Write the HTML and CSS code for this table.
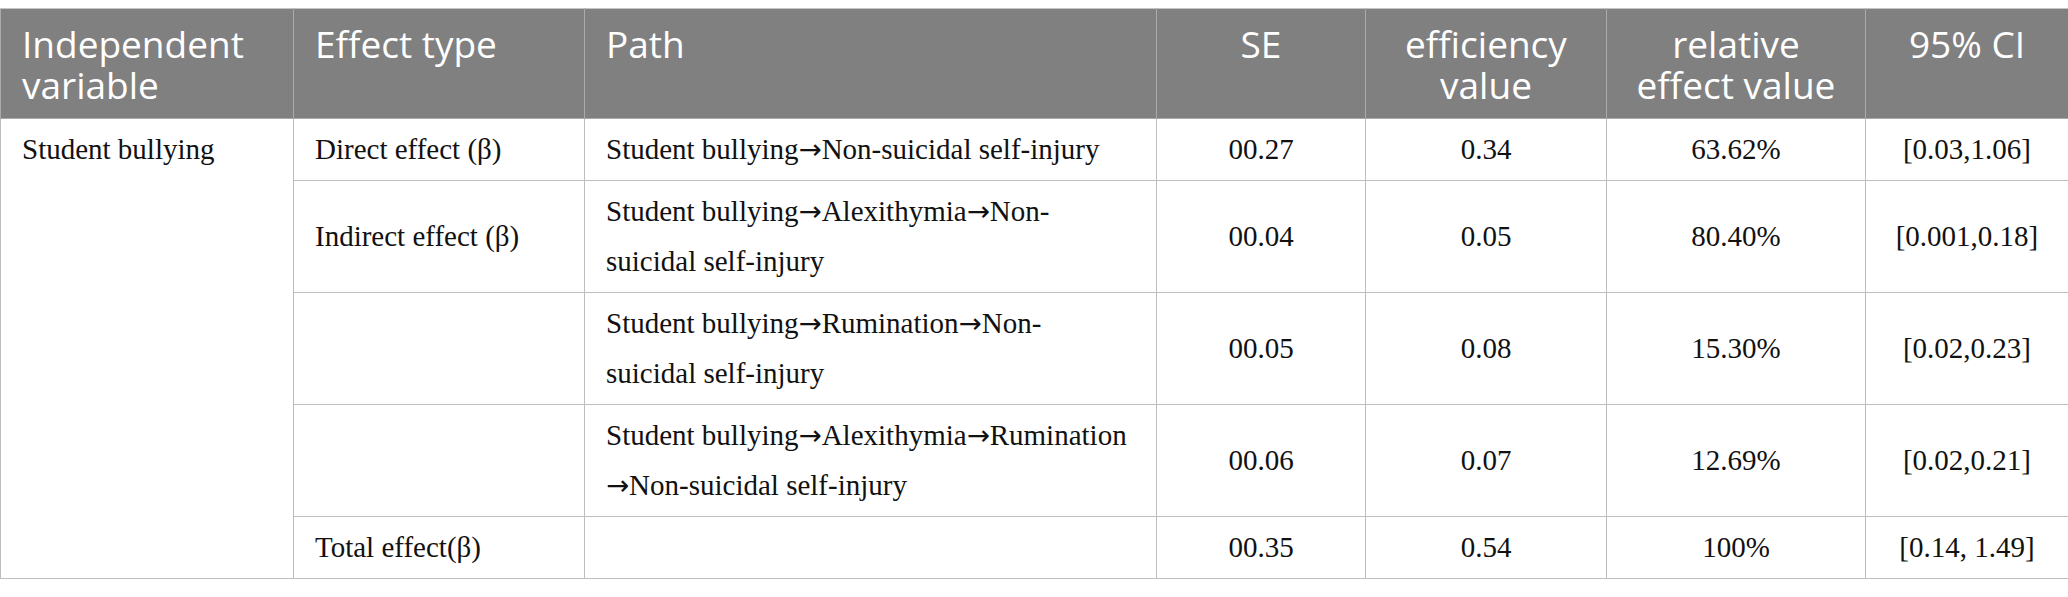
FILE: index.html
```html
<!DOCTYPE html>
<html>
<head>
<meta charset="utf-8">
<link rel="stylesheet" href="styles.css">
</head>
<body>
<div class="page">
<table class="data">
<colgroup>
<col class="c1"><col class="c2"><col class="c3"><col class="c4"><col class="c5"><col class="c6"><col class="c7">
</colgroup>
<thead>
<tr>
<th class="left">Independent variable</th>
<th class="left">Effect type</th>
<th class="left">Path</th>
<th>SE</th>
<th>efficiency value</th>
<th>relative effect value</th>
<th>95% CI</th>
</tr>
</thead>
<tbody>
<tr>
<td class="left top" rowspan="5">Student bullying</td>
<td class="left">Direct effect (β)</td>
<td class="left path">Student bullying<span class="arr">→</span>Non-suicidal self-injury</td>
<td>00.27</td>
<td>0.34</td>
<td>63.62%</td>
<td>[0.03,1.06]</td>
</tr>
<tr>
<td class="left">Indirect effect (β)</td>
<td class="left path">Student bullying<span class="arr">→</span>Alexithymia<span class="arr">→</span>Non-<br>suicidal self-injury</td>
<td>00.04</td>
<td>0.05</td>
<td>80.40%</td>
<td>[0.001,0.18]</td>
</tr>
<tr>
<td class="left"></td>
<td class="left path">Student bullying<span class="arr">→</span>Rumination<span class="arr">→</span>Non-<br>suicidal self-injury</td>
<td>00.05</td>
<td>0.08</td>
<td>15.30%</td>
<td>[0.02,0.23]</td>
</tr>
<tr>
<td class="left"></td>
<td class="left path">Student bullying<span class="arr">→</span>Alexithymia<span class="arr">→</span>Rumination<br><span class="arr">→</span>Non-suicidal self-injury</td>
<td>00.06</td>
<td>0.07</td>
<td>12.69%</td>
<td>[0.02,0.21]</td>
</tr>
<tr>
<td class="left">Total effect(β)</td>
<td class="left"></td>
<td>00.35</td>
<td>0.54</td>
<td>100%</td>
<td>[0.14, 1.49]</td>
</tr>
</tbody>
</table>
</div>
</body>
</html>
```
FILE: styles.css
```css
html, body {
  margin: 0;
  padding: 0;
  background: #ffffff;
}
.page {
  padding-top: 8px;
}
.data {
  width: 2068px;
  table-layout: fixed;
  border-collapse: collapse;
}
.c1 { width: 293px; }
.c2 { width: 291px; }
.c3 { width: 572px; }
.c4 { width: 209px; }
.c5 { width: 241px; }
.c6 { width: 259px; }
.c7 { width: 203px; }

.data th {
  background: #7f807f;
  color: #ffffff;
  font-family: "Open Sans", "Noto Sans", sans-serif;
  font-weight: 400;
  font-size: 37px;
  line-height: 41px;
  text-align: center;
  vertical-align: top;
  padding: 14px 21px 13px 21px;
  border: 1px solid #a9aaa9;
  border-top-color: #c4c4c4;
  height: 82px;
}
.data td {
  font-family: "Liberation Serif", "Times New Roman", serif;
  font-size: 29px;
  line-height: 50px;
  color: #111111;
  text-align: center;
  vertical-align: middle;
  padding: 5px 21px 6px 21px;
  border: 1px solid #bdbdbd;
}
.data .left {
  text-align: left;
}
.data td.top {
  vertical-align: top;
}
.data td.path {
  padding-right: 4px;
  white-space: nowrap;
}
.arr {
  font-family: "DejaVu Sans", sans-serif;
  font-size: 0.95em;
}
```
